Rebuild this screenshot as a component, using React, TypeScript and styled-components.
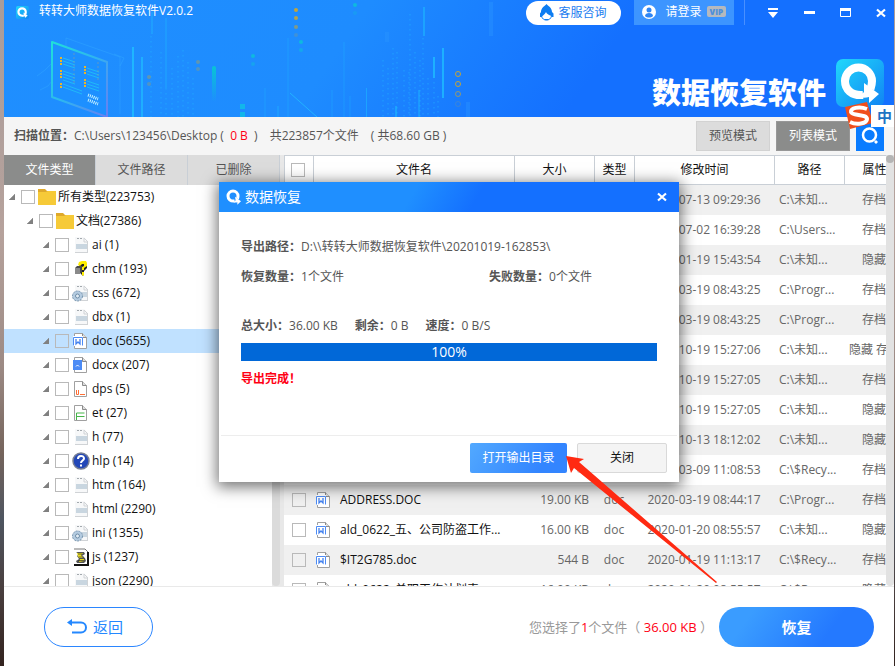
import React from 'react';
import styled, { createGlobalStyle, css } from 'styled-components';

const GlobalStyle = createGlobalStyle`
  *, *::before, *::after { box-sizing: border-box; }
  html, body { margin: 0; }
  body, button, input, table {
    font-family: "Open Sans", "Noto Sans CJK SC", sans-serif;
    font-size: 12px;
  }
  body { color: #555; overflow: hidden; line-height: 18px; }
  button { padding: 0; border: 0; cursor: pointer; line-height: 18px; white-space: nowrap; }
  svg { display: block; flex: none; }
`;

const Desktop = styled.div`
  display: flex;
  height: 100vh;
  padding: 0 1px 0 4px;
  background: linear-gradient(#a99c9a, #b6a29c 35%, #9c8a84 55%, #75645c 68%, #4e5560 78%, #4a4040 88%, #33231f);
`;
const Window = styled.div`
  position: relative;
  flex: 1;
  min-width: 0;
  display: flex;
  flex-direction: column;
  background: #fff;
`;

/* header */
const Banner = styled.header`
  position: relative;
  flex: none;
  display: flex;
  flex-direction: column;
  justify-content: space-between;
  height: 117px;
  color: #fff;
  background: linear-gradient(125deg, #1f8fff 0%, #1e8cff 38%, #1470ff 66%, #1470ff 100%);
`;
const BannerArt = styled.svg`
  position: absolute;
  left: 0;
  top: 0;
`;
const TitleBar = styled.div`
  position: relative;
  display: flex;
  align-items: center;
  height: 25px;
  padding: 0 3px 0 12px;
`;
const AppTitle = styled.h1`
  margin: 0 auto 4px 10px;
  font-size: 12px;
  font-weight: 400;
  line-height: 18px;
`;
const SupportButton = styled.button`
  display: flex;
  align-items: center;
  gap: 5px;
  height: 24px;
  margin-right: 13px;
  padding: 0 14px 0 13px;
  border-radius: 12px;
  background: #fff;
  color: #1a7cf0;
`;
const LoginButton = styled.button`
  display: flex;
  align-items: center;
  gap: 5px;
  height: 25px;
  padding: 0 8px 2px 8px;
  background: #3d95ff;
  color: #fff;
`;
const LoginText = styled.span`
  margin-left: 5px;
`;
const VipTag = styled.span`
  padding: 0 3px;
  border-radius: 2px;
  background: #b5b9be;
  color: #4d8fdb;
  font-size: 8px;
  font-weight: 800;
  line-height: 11px;
`;
const Separator = styled.span`
  width: 1px;
  height: 25px;
  margin: 0 18px 0 10px;
  background: #4990ff;
`;
const WindowButtons = styled.div`
  display: flex;
  gap: 16px;
`;
const IconButton = styled.button`
  display: grid;
  place-items: center;
  width: 20px;
  height: 22px;
  background: none;
  color: inherit;
`;
const Brand = styled.div`
  position: relative;
  display: flex;
  justify-content: flex-end;
  align-items: center;
  gap: 10px;
  padding: 0 10px 10px 0;
`;
const BrandName = styled.strong`
  padding-top: 16px;
  font-family: "Noto Sans CJK SC", sans-serif;
  font-size: 29px;
  font-weight: 900;
  line-height: 30px;
`;

/* location bar */
const InfoBar = styled.div`
  flex: none;
  display: flex;
  align-items: center;
  gap: 6px;
  height: 38px;
  padding: 0 10px;
  background: #f5f5f5;
`;
const Location = styled.p`
  flex: 1;
  display: flex;
  gap: 12px;
  margin: 0;
  white-space: pre;
`;
const Red = styled.span`
  color: #ff0014;
`;
const ModeButton = styled.button<{ $active?: boolean }>`
  width: 74px;
  height: 30px;
  border: 1px solid ${p => (p.$active ? '#979797' : '#d2d2d2')};
  background: ${p => (p.$active ? '#8b8c8b' : '#dcdcdc')};
  color: ${p => (p.$active ? '#fff' : '#555')};
`;
const SearchButton = styled.button`
  display: grid;
  place-items: center;
  width: 28px;
  height: 30px;
  background: #0a7cff;
`;

/* main area */
const Main = styled.main`
  flex: 1;
  min-height: 0;
  display: flex;
  overflow: hidden;
`;
const Sidebar = styled.aside`
  flex: none;
  display: flex;
  flex-direction: column;
  width: 280px;
  background: #e8e8e8;
`;
const Tabs = styled.div`
  flex: none;
  display: flex;
  gap: 1px;
  height: 30px;
  margin-right: 4px;
  padding-right: 1px;
  background: #c9cfd6;
`;
const Tab = styled.button<{ $active?: boolean }>`
  flex: 1;
  background: ${p => (p.$active ? '#8b8c8b' : '#dcdcdc')};
  color: ${p => (p.$active ? '#fff' : '#555')};
`;
const TreeArea = styled.div`
  flex: 1;
  min-height: 0;
  display: flex;
`;
const Tree = styled.ul`
  flex: 1;
  margin: 0;
  padding: 0;
  list-style: none;
  background: #fff;
  color: #111;
`;
const TreeRow = styled.li<{ $level: number; $selected?: boolean }>`
  display: flex;
  align-items: center;
  height: 24px;
  padding-left: ${p => [5, 23, 39][p.$level]}px;
  ${p => p.$selected && css`background: #c0e1ff;`}
`;
const TreeLabel = styled.label`
  display: flex;
  align-items: center;
  margin-left: 6px;
`;
const TreeText = styled.span`
  margin-left: 2px;
`;
const IconSlot = styled.span`
  display: grid;
  place-items: center;
  width: 18px;
  margin-left: 3px;
`;
const TreeScroll = styled.div`
  width: 8px;
  margin-right: 4px;
  border-radius: 0 0 4px 4px;
  background: #dbdbdb;
`;
const Check = styled.input.attrs({ type: 'checkbox' })`
  appearance: none;
  flex: none;
  display: block;
  width: 14px;
  height: 14px;
  margin: 0;
  border: 1px solid #b9b9b9;
  background: transparent;
`;

const TableArea = styled.section`
  flex: 1;
  min-width: 0;
  overflow: hidden;
`;
const FileTable = styled.table`
  width: calc(100% + 18px);
  border-collapse: separate;
  border-spacing: 0;
  table-layout: fixed;
`;
const Col = styled.col<{ $w?: number }>`
  width: ${p => (p.$w ? p.$w + 'px' : 'auto')};
`;
const Th = styled.th`
  height: 30px;
  padding: 0;
  border: solid #c9cfd6;
  border-width: 1px 0 1px 1px;
  color: #111;
  font-weight: 400;
  background: #fff;
`;
const HeadCheck = styled(Check)`
  margin: 0 6px;
`;
const Tr = styled.tr`
  &:nth-child(odd) { background: #f0f0f0; }
`;
const Td = styled.td<{ $align?: string }>`
  height: 30px;
  padding: 0 5px;
  overflow: hidden;
  white-space: nowrap;
  text-align: ${p => p.$align || 'left'};
  color: #666;
`;
const CheckCell = styled(Td)`
  padding: 0 8px;
`;
const NameCell = styled(Td)`
  padding: 0 2px;
  color: #111;
`;
const FileName = styled.span`
  display: flex;
  align-items: center;
  gap: 7px;
`;
const TableScroll = styled.div`
  flex: none;
  width: 8px;
  border-radius: 0 0 4px 4px;
  background: #e2e2e2;
`;
const ScrollKnob = styled.div`
  width: 8px;
  height: 8px;
  border-radius: 4px;
  background: #b5b5b5;
`;

/* footer */
const Footer = styled.footer`
  flex: none;
  display: flex;
  align-items: center;
  height: 80px;
  padding: 0 20px 0 40px;
  border-top: 1px solid #e9e9e9;
  background: #fff;
`;
const BackButton = styled.button`
  display: flex;
  align-items: center;
  gap: 6px;
  width: 109px;
  height: 40px;
  padding: 0 22px;
  border: 1px solid #2b86ff;
  border-radius: 20px;
  background: #fff;
  color: #2488ff;
  font-size: 15px;
`;
const Summary = styled.p`
  margin: 0 6px 0 auto;
  font-size: 13px;
  color: #999;
  white-space: pre;
`;
const RecoverButton = styled.button`
  width: 155px;
  height: 40px;
  border-radius: 20px;
  background: linear-gradient(125deg, #3a9cff 20%, #2479ff 70%);
  color: #fff;
  font-size: 15px;
  font-weight: 700;
`;

/* dialog */
const Overlay = styled.div`
  position: absolute;
  inset: 0;
  display: grid;
  place-items: center;
  padding-bottom: 2px;
`;
const Dialog = styled.section`
  position: relative;
  display: flex;
  flex-direction: column;
  width: 460px;
  height: 300px;
  background: #fff;
  box-shadow: 0 3px 14px 2px rgba(0, 0, 0, 0.55);
`;
const DialogBar = styled.div`
  display: flex;
  align-items: center;
  gap: 3px;
  height: 30px;
  padding: 0 7px;
  background: linear-gradient(120deg, #1f8fff 42%, #1470ff 56%);
  color: #fff;
`;
const DialogTitle = styled.h2`
  flex: 1;
  margin: 0;
  font-size: 14px;
  font-weight: 400;
`;
const DialogBody = styled.div`
  flex: 1;
  padding: 26px 22px 0;
`;
const Facts = styled.dl<{ $gap?: number }>`
  display: flex;
  gap: ${p => p.$gap || 0}px;
  margin: 0 0 12px;
`;
const Fact = styled.div<{ $half?: boolean }>`
  display: flex;
  ${p => p.$half && css`width: 248px;`}
`;
const Term = styled.dt`
  font-weight: 700;
`;
const Value = styled.dd`
  margin: 0;
`;
const Spacer = styled.div`
  height: 19px;
`;
const Progress = styled.div`
  height: 18px;
  margin-top: -4px;
  background: #0168d8;
  color: #fff;
  font-size: 14px;
  text-align: center;
`;
const Done = styled.p`
  margin: 9px 0 0;
  color: #ff0014;
  font-weight: 700;
`;
const DialogFooter = styled.div`
  display: flex;
  justify-content: flex-end;
  gap: 10px;
  height: 47px;
  margin: 0 2px;
  padding: 7px 10px 0 0;
  border-top: 1px solid #ededed;
`;
const OpenButton = styled.button`
  width: 97px;
  height: 30px;
  border-radius: 2px;
  background: linear-gradient(125deg, #52a9ff, #3385ff 75%);
  color: #fff;
`;
const CloseButton = styled.button`
  width: 90px;
  height: 30px;
  border: 1px solid #d9d9d9;
  border-radius: 2px;
  background: #f4f4f4;
  color: #111;
`;
const Arrow = styled.svg`
  position: absolute;
  left: 345px;
  top: 272px;
  pointer-events: none;
`;
const InputBadge = styled.div`
  position: absolute;
  top: 102px;
  right: 0;
  display: flex;
  align-items: center;
`;
const InputMode = styled.span`
  height: 22px;
  padding: 0 2px 0 6px;
  margin-left: -2px;
  background: #fff;
  color: #1f74c4;
  font-size: 15px;
  font-weight: 700;
  line-height: 22px;
`;

/* drawings */
const QMark = ({ size }: { size: number }) => (
  <svg width={size} height={size} viewBox="0 0 48 48" fill="none" aria-hidden="true">
    <path d="M26 36C13 38 6 30 6 21a15 15 0 1 1 30 0c0 3-.5 5-1.500 8" stroke="#fff" strokeWidth="9" />
    <path d="M27 23l18 14-11 10v-7c-3 1-8 1-11 0l6-6z" fill="#fff" />
  </svg>
);

const LogoTile = ({ size }: { size: number }) => (
  <svg width={size} height={size} viewBox="0 0 48 48" fill="none" aria-hidden="true">
    <defs>
      <linearGradient id={'tile' + size} x1="0" y1="0" x2="1" y2="1">
        <stop offset="0" stopColor="#20d8fb" />
        <stop offset="1" stopColor="#1183f3" />
      </linearGradient>
    </defs>
    <rect width="48" height="48" rx="7" fill={`url(#tile${size})`} />
    <path d="M27 36C15 37 9 30 9 22a13.500 13.500 0 1 1 27 0c0 3-.5 5-1.500 8" stroke="#fff" strokeWidth="8" />
    <path d="M28 24l15 11-10 9v-6c-3 1-7 1-10 0l5-5z" fill="#fff" />
  </svg>
);

const cyanColumns = [
  [129, 47, 117, 0.6], [138, 57, 117, 0.5], [148, 12, 34, 0.25], [162, 18, 88, 0.2],
  [420, 7, 36, 0.4], [430, 57, 78, 0.6], [439, 48, 98, 0.6], [415, 90, 117, 0.3],
  [340, 42, 117, 0.12], [328, 90, 117, 0.12], [284, 38, 117, 0.12],
  [346, 96, 117, 0.12], [392, 106, 117, 0.4], [261, 88, 117, 0.12], [274, 106, 117, 0.2],
];
const dottedColumns = [
  [147, 36], [157, 52], [162, 88], [168, 68], [174, 56], [179, 50], [184, 62], [189, 78],
  [379, 60], [384, 68], [389, 48], [393, 52], [400, 70], [405, 72], [406, 14],
  [411, 52], [416, 60], [419, 38], [424, 78], [430, 82], [434, 96],
];

const BannerDrawing = () => (
  <BannerArt width="620" height="117" viewBox="0 0 620 117" fill="none" aria-hidden="true">
    <defs>
      <linearGradient id="frame" x1="0" y1="0" x2="1" y2="1">
        <stop offset="0" stopColor="#20e0d8" />
        <stop offset="0.500" stopColor="#2fb4f0" />
        <stop offset="1" stopColor="#6a7ff2" />
      </linearGradient>
      <linearGradient id="bar" x1="0" y1="0" x2="0" y2="1">
        <stop offset="0" stopColor="#08c4d4" />
        <stop offset="1" stopColor="#08c4d4" stopOpacity="0" />
      </linearGradient>
    </defs>
    {dottedColumns.map(([x, y], i) => (
      <path key={i} d={`M${x} ${y}V117`} stroke="#25b4ff" strokeWidth="2" strokeDasharray="1.500 3.500" opacity="0.300" />
    ))}
    {cyanColumns.map(([x, a, b, o], i) => (
      <path key={i} d={`M${x} ${a}V${b}`} stroke="#1fd0ff" strokeWidth="2" opacity={o} />
    ))}
    <path d="M362.500 88V117" stroke="#1fd0ff" opacity="0.400" />
    <path d="M62 38l54 19v57M62 38v10M33 76l8-6 7-7M36 90l8-4 4-5M110 54l10 4-4 8" stroke="#2fa6ff" opacity="0.500" />
    <path d="M48 42L103 62V117L48 97Z" stroke="url(#frame)" strokeWidth="2" strokeLinejoin="round" fill="#1a9bff" fillOpacity="0.200" />
    {[58, 61, 64, 71, 74, 77, 80].map(y => (
      <path key={y} d={`M59 ${y}l12 4`} stroke="#21c3f5" opacity="0.800" />
    ))}
    {[68, 71, 74, 81, 84, 87].map(y => (
      <path key={y} d={`M83 ${y}l12 4`} stroke="#21c3f5" opacity="0.800" />
    ))}
    <path d="M59 84l19 7M59 87l19 7" stroke="#21c3f5" opacity="0.800" />
    <path d="M57 57v9M57 70v9M57 83v6M81 66v9M81 79v9" stroke="#e8b52a" strokeWidth="2" strokeDasharray="2 1" />
    <path d="M70 53v30M94 62v20" stroke="#8a9ca0" strokeDasharray="2 2" opacity="0.600" />
    <path d="M84 95l10 4M84 100l10 4" stroke="#c8f4ff" strokeWidth="3" strokeDasharray="1 1" />
    <rect x="208" y="66" width="4" height="36" rx="2" fill="url(#bar)" />
    <path d="M236 104h5v5h-5zM236 112h5v5h-5z" fill="#12b6ea" />
    <path d="M286 93l27 24" stroke="#25c4ff" opacity="0.700" />
    <g fill="#0fb9df">
      <circle cx="249" cy="56" r="2" /><circle cx="249" cy="64" r="2" opacity="0.500" />
      <circle cx="297" cy="42" r="2" /><circle cx="297" cy="50" r="2" opacity="0.600" />
      <circle cx="351" cy="5" r="2" /><circle cx="351" cy="13" r="2" opacity="0.300" />
    </g>
    <g fill="#c2a43a">
      <circle cx="292" cy="10" r="2" /><circle cx="292" cy="18" r="2" opacity="0.900" />
      <circle cx="292" cy="27" r="2" opacity="0.600" /><circle cx="292" cy="35" r="2" opacity="0.200" />
      <circle cx="194" cy="62" r="2" opacity="0.400" /><circle cx="194" cy="69" r="2" opacity="0.300" />
      <circle cx="145" cy="77" r="2" opacity="0.400" /><circle cx="145" cy="84" r="2" opacity="0.300" />
    </g>
    <g stroke="#c2a43a">
      <circle cx="454" cy="74" r="2.500" /><circle cx="454" cy="84" r="2.500" />
      <circle cx="454" cy="94" r="2.500" opacity="0.700" /><circle cx="454" cy="104" r="2.500" opacity="0.200" />
    </g>
    <path d="M487 2v34M383 32v10M464 102v15" stroke="#2a95ff" strokeWidth="4" opacity="0.400" />
  </BannerArt>
);

const SupportIcon = () => (
  <svg width="15" height="17" viewBox="0 0 15 17" fill="none" aria-hidden="true">
    <path d="M7.500 0C9 2 13 3.500 13 8l1.500 1.500V13H13c-1-2-5-2-6-5-.5 2-3 3-4.500 5H1V9.500L2 8c0-4.500 4-6 5.500-8z" fill="#0d7df2" />
    <path d="M2.500 12c1 5.500 9 5.500 10 0M5.500 15.500h4" stroke="#0d7df2" />
  </svg>
);
const UserIcon = () => (
  <svg width="14" height="14" viewBox="0 0 14 14" aria-hidden="true">
    <circle cx="7" cy="7" r="7" fill="#fff" />
    <circle cx="7" cy="5" r="2.500" fill="#2f86f5" />
    <path d="M3 11c0-4 8-4 8 0-2 2-6 2-8 0z" fill="#2f86f5" />
  </svg>
);
const CloseIcon = () => (
  <svg width="10" height="10" viewBox="0 0 10 10" aria-hidden="true">
    <path d="M1 1.500l8 7M9 1.500l-8 7" stroke="#fff" strokeWidth="2.200" />
  </svg>
);
const Triangle = () => (
  <svg width="6" height="6" viewBox="0 0 6 6" aria-hidden="true"><path d="M6 0v6H0z" fill="#808080" stroke="#808080" strokeWidth="0.500" /></svg>
);
const Folder = () => (
  <svg width="18" height="16" viewBox="0 0 18 16" aria-hidden="true">
    <path d="M0 0h7l2 2h9v6H0z" fill="#dfa92b" />
    <path d="M0 3h8l2-1h8v14H0z" fill="#f6ca38" />
  </svg>
);

type Kind = 'folder' | 'page' | 'chm' | 'gear' | 'doc' | 'docx' | 'dps' | 'et' | 'help' | 'js';

const FileIcon = ({ kind }: { kind: Kind }) => {
  if (kind === 'folder') return <Folder />;
  if (kind === 'help')
    return (
      <svg width="18" height="18" viewBox="0 0 18 18" fill="none" aria-hidden="true">
        <circle cx="9" cy="9" r="8" fill="#2247b8" stroke="#777f94" strokeWidth="1.500" />
        <path d="M6 7c0-4 6-4 6-.5 0 2-3 2-3 4.500M9 12.500v2" stroke="#fff" strokeWidth="2" />
      </svg>
    );
  if (kind === 'chm')
    return (
      <svg width="16" height="16" viewBox="0 0 16 16" fill="none" aria-hidden="true">
        <path d="M7 1h5l2 2v4l-3 3v3l-1 2-2-2V7L6 5z" fill="#222" />
        <path d="M6 1l3-1h4l1 2v3l-3 2v2H9V6l2-1V3H9L7 5 5 4z" fill="#ffee00" />
        <path d="M9 11h2v3l-1 1-1-1z" fill="#ffee00" />
        <path d="M2 7l2-2h5v6l-2 2z" fill="#4a4a4a" />
        <path d="M2 7h5v6H2z" fill="#8a8a8a" />
      </svg>
    );
  if (kind === 'js')
    return (
      <svg width="16" height="18" viewBox="0 0 16 18" fill="none" aria-hidden="true">
        <path d="M1 1h11l3 3v13H1z" fill="#fff" />
        <path d="M1 1h11l3 3" stroke="#777" />
        <path d="M15 4v13H1" stroke="#111" strokeWidth="2" />
        <path d="M3 4h8l1 2-3 2 3 2 1 3-2 2H4l-1-2 3-2-2-3 2-2z" fill="#555" />
        <path d="M4 5h6l-2 2 2 3H6L5 8zM7 11h4v2l-5 1z" fill="#e8dc1c" />
        <path d="M5 6h4M6 9h5M5 12.500h6" stroke="#333" strokeWidth="0.700" />
      </svg>
    );
  if (kind === 'page' || kind === 'gear')
    return (
      <svg width="18" height="18" viewBox="0 0 18 18" fill="none" aria-hidden="true">
        <path d="M3 1h9l4 4v12H3z" fill="#f7f8f9" />
        <path d="M3 16.500h13M15.500 6v11M12 2v4h4z" stroke="#d0d3d6" />
        <path d="M5 2.500h6" stroke="#a3a9ae" strokeDasharray="2 1" />
        <path d="M4 8h11v5H4z" fill="#c9d6e0" />
        {kind === 'gear' && (
          <>
            <circle cx="5.500" cy="12" r="5" fill="#b4cbe0" stroke="#7593ad" strokeDasharray="2 1" />
            <circle cx="5.500" cy="12" r="2" fill="#e2edf5" stroke="#6f8da8" />
          </>
        )}
      </svg>
    );
  return (
    <svg width="18" height="18" viewBox="0 0 18 18" fill="none" aria-hidden="true">
      <path d="M2.500 1.500h8l4 4v11h-12z" fill="#fff" stroke="#a0a0a0" strokeLinejoin="round" />
      <path d="M10.500 1.500v4h4" fill="#ddd" stroke="#8b8b8b" />
      {kind === 'doc' && (
        <>
          <path d="M1 4h10v10H1z" fill="#fff" />
          <path d="M1.500 13.500v-8h9v8" stroke="#4c8bf5" />
          <path d="M4 7v5l2-2 2 2V7" stroke="#4482ee" strokeWidth="1.300" />
        </>
      )}
      {kind === 'docx' && (
        <>
          <path d="M1 4h9v10H1z" fill="#4c8bf5" />
          <path d="M4 10.500l1.500-1.500L7 10.500" stroke="#fff" />
        </>
      )}
      {kind === 'dps' && <path d="M4.500 10v4.500h2V10M8 14.500h5" stroke="#ff6f35" />}
      {kind === 'et' && <path d="M4.500 16V9h8M4.500 12.500h8" stroke="#46b649" />}
    </svg>
  );
};

const tree: { label: string; kind: Kind; level: number; selected?: boolean }[] = [
  { label: '所有类型(223753)', kind: 'folder', level: 0 },
  { label: '文档(27386)', kind: 'folder', level: 1 },
  { label: 'ai (1)', kind: 'page', level: 2 },
  { label: 'chm (193)', kind: 'chm', level: 2 },
  { label: 'css (672)', kind: 'gear', level: 2 },
  { label: 'dbx (1)', kind: 'page', level: 2 },
  { label: 'doc (5655)', kind: 'doc', level: 2, selected: true },
  { label: 'docx (207)', kind: 'docx', level: 2 },
  { label: 'dps (5)', kind: 'dps', level: 2 },
  { label: 'et (27)', kind: 'et', level: 2 },
  { label: 'h (77)', kind: 'page', level: 2 },
  { label: 'hlp (14)', kind: 'help', level: 2 },
  { label: 'htm (164)', kind: 'page', level: 2 },
  { label: 'html (2290)', kind: 'page', level: 2 },
  { label: 'ini (1355)', kind: 'gear', level: 2 },
  { label: 'js (1237)', kind: 'js', level: 2 },
  { label: 'json (2290)', kind: 'page', level: 2 },
];

const files: string[][] = [
  ['', '', '2020-07-13 09:29:36', 'C:\\未知...', '存档'],
  ['', '', '2020-07-02 16:39:28', 'C:\\Users...', '存档'],
  ['', '', '2020-01-19 15:43:54', 'C:\\未知...', '隐藏'],
  ['', '', '2020-03-19 08:43:25', 'C:\\Progr...', '存档'],
  ['', '', '2020-03-19 08:43:25', 'C:\\Progr...', '存档'],
  ['', '', '2020-10-19 15:27:06', 'C:\\未知...', '隐藏 存档'],
  ['', '', '2020-10-19 15:27:05', 'C:\\未知...', '存档'],
  ['', '', '2020-10-19 15:27:05', 'C:\\未知...', '隐藏'],
  ['', '', '2020-10-13 18:12:02', 'C:\\未知...', '隐藏'],
  ['', '', '2020-03-09 11:08:53', 'C:\\$Recy...', '存档'],
  ['ADDRESS.DOC', '19.00 KB', '2020-03-19 08:44:17', 'C:\\Progr...', '存档'],
  ['ald_0622_五、公司防盗工作...', '16.00 KB', '2020-01-20 08:55:57', 'C:\\未知...', '隐藏'],
  ['$IT2G785.doc', '544 B', '2020-01-19 11:13:17', 'C:\\$Recy...', '存档'],
  ['ald_0622_单职工作计划表...', '16.00 KB', '2020-01-20 08:55:57', 'C:\\$Recy...', '隐藏'],
];

export default function App() {
  return (
    <Desktop>
      <GlobalStyle />
      <Window>
        <Banner>
          <BannerDrawing />
          <TitleBar>
            <LogoTile size={13} />
            <AppTitle>转转大师数据恢复软件V2.0.2</AppTitle>
            <SupportButton><SupportIcon />客服咨询</SupportButton>
            <LoginButton>
              <UserIcon />
              <LoginText>请登录</LoginText>
              <VipTag>VIP</VipTag>
            </LoginButton>
            <Separator />
            <WindowButtons>
              <IconButton aria-label="菜单">
                <svg width="10" height="10" viewBox="0 0 10 10" fill="#fff" aria-hidden="true"><path d="M0 0h10v2H0zM0 4h10L5 10z" /></svg>
              </IconButton>
              <IconButton aria-label="最小化">
                <svg width="11" height="3" aria-hidden="true"><path d="M0 0h11v3H0z" fill="#fff" /></svg>
              </IconButton>
              <IconButton aria-label="最大化">
                <svg width="11" height="9" viewBox="0 0 11 9" fill="none" aria-hidden="true"><path d="M.5 1v7.500h10V1" stroke="#fff" /><path d="M0 0h11v3H0z" fill="#fff" /></svg>
              </IconButton>
              <IconButton aria-label="关闭窗口"><CloseIcon /></IconButton>
            </WindowButtons>
          </TitleBar>
          <Brand>
            <BrandName>数据恢复软件</BrandName>
            <LogoTile size={48} />
          </Brand>
        </Banner>

        <InfoBar>
          <Location>
            <span><b>扫描位置：</b>C:\Users\123456\Desktop ( <Red> 0 B </Red> )</span>
            <span>共223857个文件</span>
            <span>( 共68.60 GB )</span>
          </Location>
          <ModeButton>预览模式</ModeButton>
          <ModeButton $active>列表模式</ModeButton>
          <SearchButton aria-label="搜索">
            <svg width="18" height="18" viewBox="0 0 18 18" fill="none" aria-hidden="true">
              <circle cx="8.500" cy="8" r="6.500" stroke="#fff" strokeWidth="2.500" />
              <path d="M13 15l2-2 2 2-2 2z" fill="#fff" />
            </svg>
          </SearchButton>
        </InfoBar>

        <Main>
          <Sidebar>
            <Tabs>
              <Tab $active>文件类型</Tab>
              <Tab>文件路径</Tab>
              <Tab>已删除</Tab>
            </Tabs>
            <TreeArea>
              <Tree>
                {tree.map(n => (
                  <TreeRow key={n.label} $level={n.level} $selected={n.selected}>
                    <Triangle />
                    <TreeLabel>
                      <Check />
                      <IconSlot><FileIcon kind={n.kind} /></IconSlot>
                      <TreeText>{n.label}</TreeText>
                    </TreeLabel>
                  </TreeRow>
                ))}
              </Tree>
              <TreeScroll />
            </TreeArea>
          </Sidebar>
          <TableArea>
            <FileTable>
              <colgroup>
                <Col $w={29} /><Col /><Col $w={80} /><Col $w={40} /><Col $w={140} /><Col $w={70} /><Col $w={60} />
              </colgroup>
              <thead>
                <tr>
                  <Th><HeadCheck aria-label="全选" /></Th>
                  <Th>文件名</Th><Th>大小</Th><Th>类型</Th><Th>修改时间</Th><Th>路径</Th><Th>属性</Th>
                </tr>
              </thead>
              <tbody>
                {files.map(([name, size, time, path, attr], i) => (
                  <Tr key={i}>
                    <CheckCell><Check aria-label={name || '文件'} /></CheckCell>
                    <NameCell><FileName><FileIcon kind="doc" />{name}</FileName></NameCell>
                    <Td $align="right">{size}</Td>
                    <Td $align="center">doc</Td>
                    <Td $align="center">{time}</Td>
                    <Td>{path}</Td>
                    <Td $align="center">{attr}</Td>
                  </Tr>
                ))}
              </tbody>
            </FileTable>
          </TableArea>
          <TableScroll><ScrollKnob /></TableScroll>
        </Main>

        <Footer>
          <BackButton>
            <svg width="20" height="15" viewBox="0 0 20 15" fill="none" aria-hidden="true">
              <path d="M3 3.500h11a5 5 0 0 1 0 10H5" stroke="#2488ff" strokeWidth="2" />
              <path d="M0 3.500L5 0v7z" fill="#2488ff" />
            </svg>
            返回
          </BackButton>
          <Summary>您选择了<Red>1</Red>个文件（ <Red>36.00 KB</Red> ）</Summary>
          <RecoverButton>恢复</RecoverButton>
        </Footer>

        <Overlay>
          <Dialog role="dialog" aria-labelledby="dialog-title">
            <DialogBar>
              <QMark size={16} />
              <DialogTitle id="dialog-title">数据恢复</DialogTitle>
              <IconButton aria-label="关闭对话框"><CloseIcon /></IconButton>
            </DialogBar>
            <DialogBody>
              <Facts>
                <Fact><Term>导出路径：</Term><Value>D:\\转转大师数据恢复软件\20201019-162853\</Value></Fact>
              </Facts>
              <Facts>
                <Fact $half><Term>恢复数量：</Term><Value>1个文件</Value></Fact>
                <Fact><Term>失败数量：</Term><Value>0个文件</Value></Fact>
              </Facts>
              <Spacer />
              <Facts $gap={17}>
                <Fact><Term>总大小：</Term><Value>36.00 KB</Value></Fact>
                <Fact><Term>剩余：</Term><Value>0 B</Value></Fact>
                <Fact><Term>速度：</Term><Value>0 B/S</Value></Fact>
              </Facts>
              <Progress role="progressbar" aria-valuenow={100} aria-label="导出进度">100%</Progress>
              <Done>导出完成！</Done>
            </DialogBody>
            <DialogFooter>
              <OpenButton>打开输出目录</OpenButton>
              <CloseButton>关闭</CloseButton>
            </DialogFooter>
            <Arrow width="156" height="132" viewBox="0 0 156 132" aria-hidden="true">
              <path d="M2 2l18 3-5 3 138 120-1 1L10 14l-3 5z" fill="#ff2a12" />
            </Arrow>
          </Dialog>
        </Overlay>

        <InputBadge>
          <svg width="28" height="28" viewBox="0 0 28 28" fill="none" aria-hidden="true">
            <path d="M0 5L22 0l6 21-23 6z" fill="#f04e1c" />
            <path d="M22 7C14 4 5 6 6 10s16 2 16 7-11 6-17 3" stroke="#fff" strokeWidth="4" />
          </svg>
          <InputMode>中</InputMode>
        </InputBadge>
      </Window>
    </Desktop>
  );
}
